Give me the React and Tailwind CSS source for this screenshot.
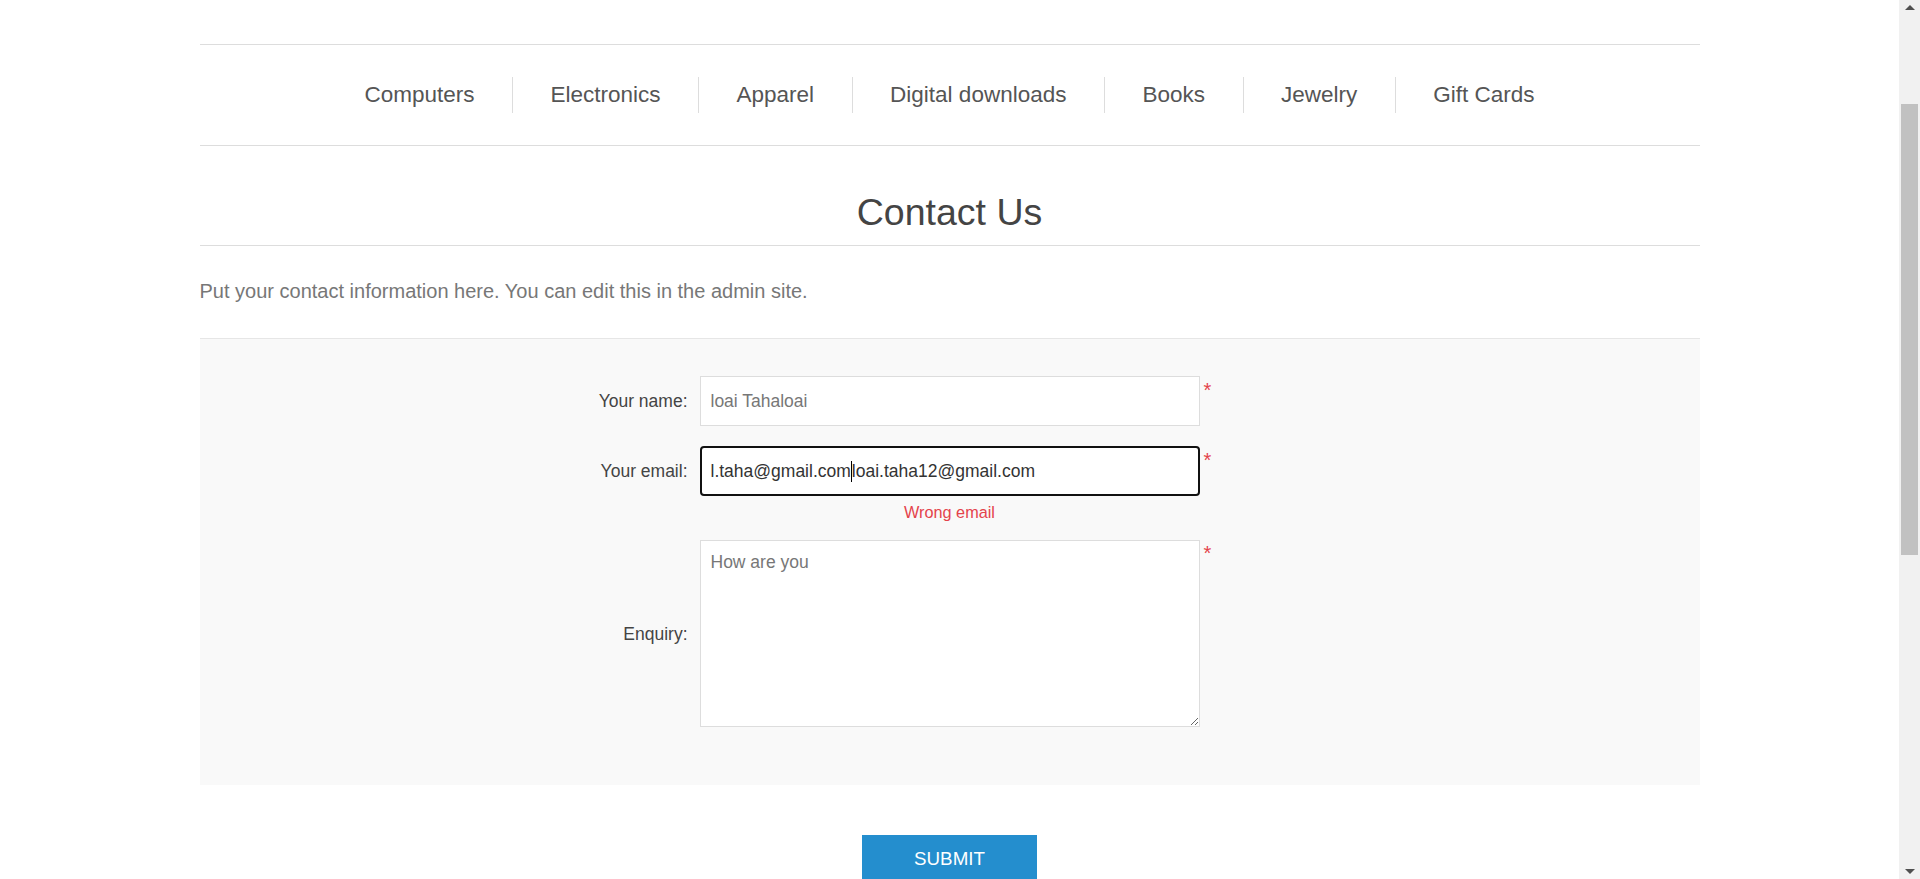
import React from "react";

const navItems = ["Computers", "Electronics", "Apparel", "Digital downloads", "Books", "Jewelry", "Gift Cards"];

function Scrollbar() {
  return (
    <div className="flex h-full w-[21px] shrink-0 flex-col bg-[#f1f1f1]">
      <div className="flex h-[21px] items-start justify-center pt-[5px]">
        <svg width="10" height="5" viewBox="0 0 10 5"><path d="M0 5 L5 0 L10 5 Z" fill="#505050" /></svg>
      </div>
      <div className="h-[83px]" />
      <div className="mx-[2px] h-[451px] bg-[#c1c1c1]" />
      <div className="flex-1" />
      <div className="flex h-[21px] items-end justify-center pb-[5px]">
        <svg width="10" height="5" viewBox="0 0 10 5"><path d="M0 0 L5 5 L10 0 Z" fill="#505050" /></svg>
      </div>
    </div>
  );
}

function Asterisk({ className = "" }) {
  return <span className={"ml-[4px] text-[20px] leading-[20px] text-[#e4434b] " + className}>*</span>;
}

export default function App() {
  return (
    <div
      className="flex h-[879px] w-[1920px] overflow-hidden bg-white"
      style={{ fontFamily: '"Liberation Sans", Arial, sans-serif' }}
    >
      <div className="h-full flex-1 overflow-hidden">
        <div className="mx-auto w-[1500px] pt-[44px]">
          {/* Header menu */}
          <nav className="flex h-[102px] items-center justify-center border-y border-[#dddddd]">
            {navItems.map((item, i) => (
              <React.Fragment key={item}>
                {i > 0 && <div className="h-[36px] w-px bg-[#dddddd]" />}
                <a className="px-[37.5px] text-[22.5px] leading-[24px] text-[#555555]">{item}</a>
              </React.Fragment>
            ))}
          </nav>

          {/* Page title */}
          <div className="mt-[44px] border-b border-[#dddddd] pb-[11px] text-center">
            <h1 className="text-[37.5px] font-normal leading-[44px] text-[#444444]">Contact Us</h1>
          </div>

          <p className="mt-[31px] text-[20px] leading-[28px] text-[#777777]">
            Put your contact information here. You can edit this in the admin site.
          </p>

          {/* Form */}
          <div className="mt-[33px] border-t border-[#e6e6e6] bg-[#f9f9f9] pb-[58px] pt-[37px]">
            {/* Name */}
            <div className="flex items-start">
              <label className="mr-[12px] w-[488px] text-right text-[17.5px] leading-[50px] text-[#444444]">Your name:</label>
              <div className="flex h-[50px] w-[500px] items-center border border-[#dddddd] bg-white px-[10px] text-[17.5px] text-[#777777]">
                loai Tahaloai
              </div>
              <Asterisk className="mt-[4px]" />
            </div>

            {/* Email */}
            <div className="mt-[20px] flex items-start">
              <label className="mr-[12px] w-[488px] text-right text-[17.5px] leading-[50px] text-[#444444]">Your email:</label>
              <div className="flex w-[500px] flex-col">
                <div className="flex h-[50px] items-center rounded-[4px] border-2 border-[#111111] bg-white px-[9px] text-[17.5px] text-[#333333]">
                  <span>l.taha@gmail.com</span>
                  <span className="h-[21px] w-px bg-black" />
                  <span>loai.taha12@gmail.com</span>
                </div>
                <span className="mt-[5px] text-center text-[16.25px] leading-[22px] text-[#e4434b]">Wrong email</span>
              </div>
              <Asterisk className="mt-[4px]" />
            </div>

            {/* Enquiry */}
            <div className="mt-[17px] flex items-start">
              <label className="mr-[12px] w-[488px] self-center text-right text-[17.5px] leading-[24px] text-[#444444]">Enquiry:</label>
              <textarea
                defaultValue="How are you"
                className="block h-[187px] w-[500px] border border-[#dddddd] bg-white px-[10px] py-[10px] text-[17.5px] leading-[22px] text-[#777777] outline-none"
                style={{ fontFamily: '"Liberation Sans", Arial, sans-serif', resize: "both" }}
              />
              <Asterisk className="mt-[3px]" />
            </div>
          </div>

          <div className="mt-[50px] flex justify-center">
            <button className="h-[56px] w-[175px] bg-[#248ece] pb-[16px] pt-[8px] text-[18.75px] uppercase leading-[22px] text-white">
              Submit
            </button>
          </div>
        </div>
      </div>
      <Scrollbar />
    </div>
  );
}
